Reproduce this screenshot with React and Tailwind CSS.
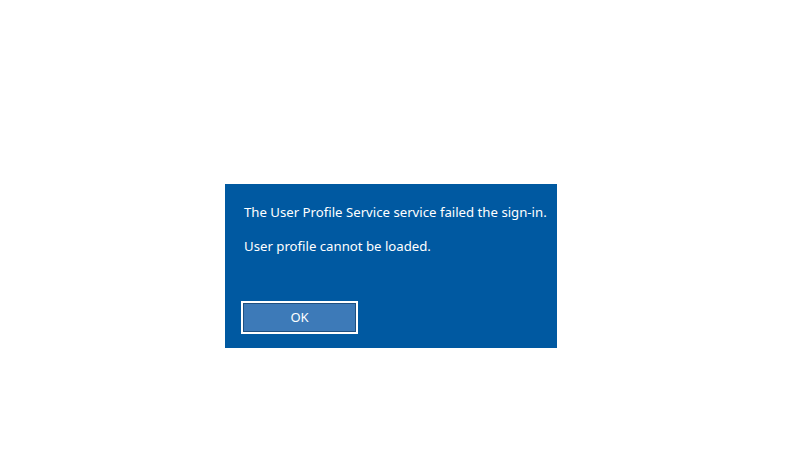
export default function App() {
  return (
    <div className="w-[800px] h-[450px] bg-white pt-[184px] pl-[225px]">
      <div
        className="w-[332px] h-[164px] bg-[#0059a1] text-white flex flex-col pl-[19px] pt-[19px]"
        style={{ fontFamily: '"Noto Sans", "Open Sans", sans-serif' }}
      >
        <p className="text-[13.2px] leading-[18px]">
          The User Profile Service service failed the sign-in.
        </p>
        <p className="text-[13.2px] leading-[18px] mt-[16px]">
          User profile cannot be loaded.
        </p>
        <button className="mt-[46px] -ml-[3px] w-[117px] h-[33px] border-2 border-white bg-[#3d7ab8] text-[13px] text-white outline outline-1 -outline-offset-[3px] outline-[#1e4f80]">
          OK
        </button>
      </div>
    </div>
  );
}
